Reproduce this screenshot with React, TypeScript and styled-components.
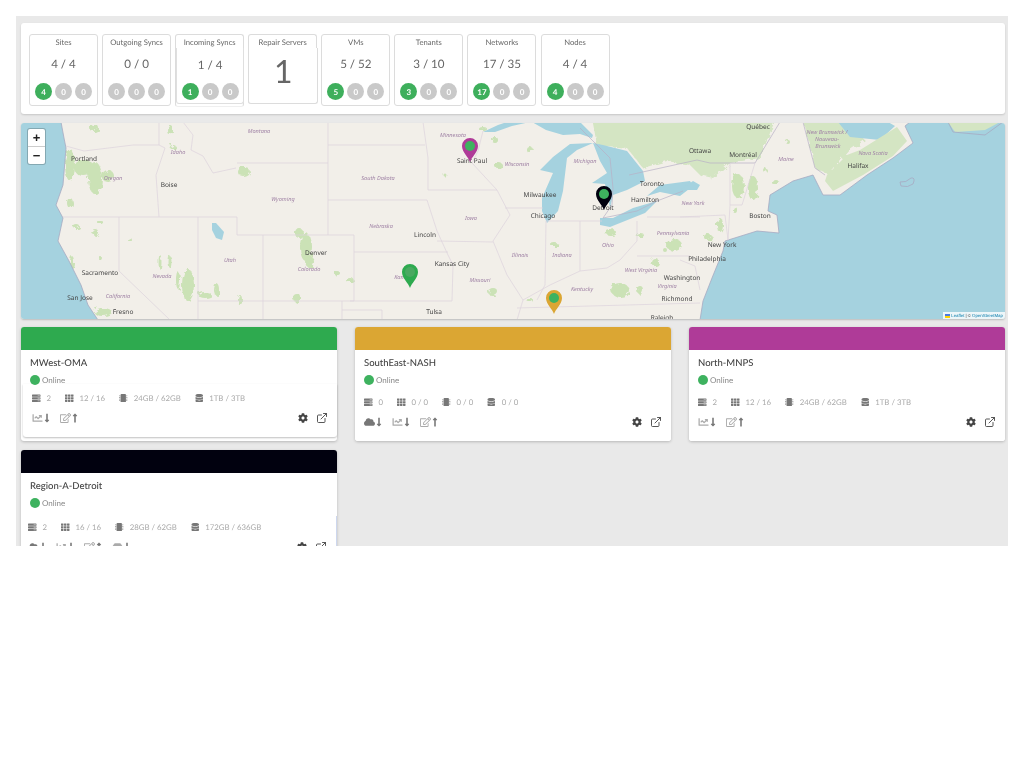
import React from "react";
import styled, { createGlobalStyle } from "styled-components";
import {
  FaServer, FaTh, FaMicrochip, FaDatabase, FaCloud, FaChartLine, FaRegEdit, FaCog,
  FaLongArrowAltDown, FaLongArrowAltUp, FaHdd,
} from "react-icons/fa";
import { ExternalLink } from "lucide-react";

const Global = createGlobalStyle`
  html, body { margin: 0; padding: 0; background: #fff; }
  body { font-family: "Lato", "Liberation Sans", sans-serif; text-rendering: geometricPrecision; }
`;

const Page = styled.div`
  margin: 16px 16px 0;
  width: 992px;
  height: 530px;
  overflow: hidden;
  background: #e9e9e9;
  padding: 7px 3px 0 5px;
  box-sizing: border-box;
  filter: blur(0.45px);
`;

const StatsPanel = styled.section`
  height: 91px;
  box-sizing: border-box;
  background: #fff;
  border-radius: 3px;
  box-shadow: 0 1px 2px rgba(0, 0, 0, 0.15);
  padding: 11px 8px;
  display: flex;
  gap: 4.08px;
`;

const StatCard = styled.div<{ $split?: boolean }>`
  width: 69px;
  height: ${(p) => (p.$split ? 73 : 72)}px;
  box-sizing: border-box;
  border: 1px solid #dcdcdc;
  border-bottom-color: ${(p) => (p.$split ? "#efefef" : "#dcdcdc")};
  border-radius: 3px;
  background: #fff;
  display: flex;
  flex-direction: column;
  align-items: center;
`;

const StatTitle = styled.div`
  font-size: 7.7px;
  line-height: 10px;
  margin: 2px 0 1px;
  color: #666;
  white-space: nowrap;
`;

const StatBody = styled.div<{ $split?: boolean }>`
  box-sizing: border-box;
  display: flex;
  flex-direction: column;
  align-items: center;
  width: ${(p) => (p.$split ? "68px" : "100%")};
  height: ${(p) => (p.$split ? "56px" : "auto")};
  margin-right: ${(p) => (p.$split ? "-1px" : "0")};
  background: #fff;
  ${(p) => (p.$split ? "border: 1px solid #dfdfdf; border-top: none; border-radius: 0 0 3px 3px;" : "")}
`;

const StatValue = styled.div<{ $dy?: number }>`
  font-size: 11.6px;
  line-height: 15px;
  margin-top: ${(p) => 9 + (p.$dy ?? 0)}px;
  color: #666;
  white-space: nowrap;
`;

const Badges = styled.div<{ $dy?: number }>`
  display: flex;
  gap: 3px;
  margin-top: ${(p) => 11 - (p.$dy ?? 0)}px;
`;

const Badge = styled.span<{ $on?: boolean }>`
  width: 17px;
  height: 17px;
  border-radius: 50%;
  background: ${(p) => (p.$on ? "#3eaf5c" : "#c9c9c9")};
  color: #fff;
  font-size: 8px;
  font-weight: 700;
  display: flex;
  align-items: center;
  justify-content: center;
`;

const RepairCard = styled(StatCard)`
  border-bottom: none;
  height: 70px;
  align-items: flex-start;
`;

const RepairTitle = styled(StatTitle)`
  align-self: center;
`;

const BigBody = styled.div`
  width: 70px;
  height: 56px;
  margin-left: -1px;
  box-sizing: border-box;
  border: 1px solid #dcdcdc;
  border-top: none;
  border-radius: 0 0 3px 3px;
  background: #fff;
  font-size: 32px;
  line-height: 46px;
  color: #666;
  text-align: center;
`;

const MapBox = styled.section`
  position: relative;
  height: 196px;
  margin-top: 9px;
  border-radius: 3px;
  overflow: hidden;
  box-shadow: 0 1px 2px rgba(0, 0, 0, 0.2);
  background: #f2efe9;
`;

const MapSvg = styled.svg`
  display: block;
  width: 984px;
  height: 196px;
`;

const ZoomControl = styled.div`
  position: absolute;
  left: 7px;
  top: 6px;
  width: 17px;
  height: 35px;
  background: #fff;
  border-radius: 2px;
  box-shadow: 0 0 0 1px rgba(0, 0, 0, 0.2);
  display: flex;
  flex-direction: column;
`;

const ZoomButton = styled.div`
  flex: 1;
  display: flex;
  align-items: center;
  justify-content: center;
  font-family: "Liberation Sans", sans-serif;
  font-weight: 700;
  font-size: 13px;
  color: #222;
  & + & { border-top: 1px solid #ccc; }
`;

const Attribution = styled.div`
  position: absolute;
  right: 0;
  bottom: 0;
  height: 7px;
  padding: 0 2px;
  display: flex;
  align-items: center;
  gap: 1px;
  background: rgba(255, 255, 255, 0.8);
  font-family: "Liberation Sans", sans-serif;
  font-size: 4.4px;
  color: #444;
  white-space: nowrap;
`;

const Flag = styled.svg`
  width: 5px;
  height: 4px;
`;

const AttrLink = styled.span`
  color: #0078a8;
`;

const CardGrid = styled.div`
  display: grid;
  grid-template-columns: repeat(3, 316px);
  column-gap: 18px;
  row-gap: 9px;
  margin-top: 8px;
  align-items: start;
`;

const SiteCard = styled.article<{ $h: number }>`
  height: ${(p) => p.$h}px;
  background: #fff;
  border-radius: 3px;
  box-shadow: 0 1px 3px rgba(0, 0, 0, 0.22);
`;

const SiteHeader = styled.div<{ $color: string }>`
  height: 23px;
  background: ${(p) => p.$color};
  border-radius: 3px 3px 0 0;
`;

const SiteInfo = styled.div`
  padding: 7px 9px 0;
`;

const SiteName = styled.div`
  font-size: 9.5px;
  line-height: 13px;
  font-weight: 500;
  color: #444;
  white-space: nowrap;
`;

const Status = styled.div`
  display: flex;
  align-items: center;
  gap: 2px;
  margin-top: 5px;
  font-size: 8px;
  line-height: 10px;
  color: #888;
`;

const Dot = styled.span`
  width: 10px;
  height: 10px;
  border-radius: 50%;
  background: #3eb25f;
`;

const SitePanel = styled.div<{ $dx: number; $mt: number; $pt: number; $pl: number; $shadow?: boolean; $edge?: boolean }>`
  margin-top: ${(p) => p.$mt}px;
  margin-left: ${(p) => p.$dx}px;
  padding: ${(p) => p.$pt}px 9px 0 ${(p) => p.$pl}px;
  height: 53px;
  box-sizing: border-box;
  background: #fff;
  border-radius: 0 0 3px 3px;
  box-shadow: ${(p) => (p.$shadow ? "0 1px 2px rgba(0,0,0,0.25)" : "none")};
  border-right: ${(p) => (p.$edge ? "1px solid #cdd7ee" : "none")};
`;

const Metrics = styled.div`
  display: flex;
  gap: 14px;
  align-items: center;
  height: 10px;
`;

const Metric = styled.span`
  display: flex;
  align-items: center;
  gap: 6px;
  font-size: 7.8px;
  color: #aaa;
  white-space: nowrap;
  svg { color: #777; width: 8.5px; height: 8.5px; }
`;

const Actions = styled.div`
  display: flex;
  align-items: center;
  justify-content: space-between;
  margin-top: 10px;
  height: 10px;
`;

const Flows = styled.div`
  display: flex;
  gap: 10px;
`;

const Flow = styled.span<{ $dark?: boolean }>`
  display: flex;
  align-items: center;
  gap: 1px;
  color: ${(p) => (p.$dark ? "#777" : "#aaa")};
  svg { width: 11px; height: 10px; }
`;

const Arrow = styled.span`
  display: flex;
  color: #777;
  svg { width: 6px; height: 10px; }
`;

const Tools = styled.div`
  display: flex;
  align-items: center;
  gap: 8px;
  color: #444;
`;

type Stat = { title: string; value: string; on: string; split?: boolean };

const stats: Stat[] = [
  { title: "Sites", value: "4 / 4", on: "4" },
  { title: "Outgoing Syncs", value: "0 / 0", on: "" },
  { title: "Incoming Syncs", value: "1 / 4", on: "1", split: true },
  { title: "VMs", value: "5 / 52", on: "5" },
  { title: "Tenants", value: "3 / 10", on: "3" },
  { title: "Networks", value: "17 / 35", on: "17" },
  { title: "Nodes", value: "4 / 4", on: "4" },
];

type Metric4 = { hosts: string; cpu: string; mem: string; disk: string };
type Site = {
  name: string;
  color: string;
  h: number;
  m: Metric4;
  flows: ("cloud" | "chart" | "edit" | "hdd")[];
  dx: number;
  mt: number;
  pt: number;
  pl: number;
  shadow?: boolean;
  edge?: boolean;
};

const sites: Site[] = [
  { name: "MWest-OMA", color: "#2eaa4f", h: 114, m: { hosts: "2", cpu: "12 / 16", mem: "24GB / 62GB", disk: "1TB / 3TB" }, flows: ["chart", "edit"], dx: 2, mt: 0, pt: 9, pl: 9, shadow: true },
  { name: "SouthEast-NASH", color: "#dba633", h: 114, m: { hosts: "0", cpu: "0 / 0", mem: "0 / 0", disk: "0 / 0" }, flows: ["cloud", "chart", "edit"], dx: 0, mt: 4, pt: 9, pl: 9 },
  { name: "North-MNPS", color: "#af3b98", h: 114, m: { hosts: "2", cpu: "12 / 16", mem: "24GB / 62GB", disk: "1TB / 3TB" }, flows: ["chart", "edit"], dx: 0, mt: 4, pt: 9, pl: 9 },
  { name: "Region-A-Detroit", color: "#01010f", h: 114, m: { hosts: "2", cpu: "16 / 16", mem: "28GB / 62GB", disk: "172GB / 636GB" }, flows: ["cloud", "chart", "edit", "hdd"], dx: 0, mt: 9, pt: 6, pl: 7, edge: true },
];

const FlowIcon = ({ kind }: { kind: string }) => {
  if (kind === "cloud") return <Flow $dark><FaCloud /><Arrow><FaLongArrowAltDown /></Arrow></Flow>;
  if (kind === "chart") return <Flow><FaChartLine /><Arrow><FaLongArrowAltDown /></Arrow></Flow>;
  if (kind === "hdd") return <Flow><FaHdd /><Arrow><FaLongArrowAltDown /></Arrow></Flow>;
  return <Flow><FaRegEdit /><Arrow><FaLongArrowAltUp /></Arrow></Flow>;
};

const SiteBlock = ({ s }: { s: Site }) => (
  <SiteCard $h={s.h}>
    <SiteHeader $color={s.color} />
    <SiteInfo>
      <SiteName>{s.name}</SiteName>
      <Status><Dot />Online</Status>
    </SiteInfo>
    <SitePanel $dx={s.dx} $mt={s.mt - 1} $pt={s.pt} $pl={s.pl} $shadow={s.shadow} $edge={s.edge}>
      <Metrics>
        <Metric><FaServer />{s.m.hosts}</Metric>
        <Metric><FaTh />{s.m.cpu}</Metric>
        <Metric><FaMicrochip />{s.m.mem}</Metric>
        <Metric><FaDatabase />{s.m.disk}</Metric>
      </Metrics>
      <Actions>
        <Flows>{s.flows.map((f) => <FlowIcon key={f} kind={f} />)}</Flows>
        <Tools>
          <FaCog size={10} />
          <ExternalLink size={12} strokeWidth={1.8} />
        </Tools>
      </Actions>
    </SitePanel>
  </SiteCard>
);

/* ---------- map drawing, in screen coordinates ---------- */
const water = "#a5d2df";
const border = "#ddd3dc";

const City = styled.text`
  font-family: "Noto Sans", "Open Sans", sans-serif;
  font-size: 6.5px;
  fill: #444;
  text-anchor: middle;
  dominant-baseline: central;
`;
const StateName = styled.text`
  font-family: "Noto Sans", "Open Sans", sans-serif;
  font-size: 5.6px;
  font-style: italic;
  fill: #a184a6;
  text-anchor: middle;
  dominant-baseline: central;
`;
const Border = styled.polyline<{ $strong?: boolean }>`
  fill: none;
  stroke: ${(p) => (p.$strong ? "#b7b0c6" : border)};
  stroke-width: 0.7;
`;
const Sea = styled.polygon`
  fill: ${water};
`;
const Coast = styled.polyline`
  fill: none;
  stroke: #a7a9c2;
  stroke-width: 0.8;
`;
const Wood = styled.ellipse`
  fill: #cbe2b6;
`;
const WoodArea = styled.polygon`
  fill: #d4e5c3;
`;

const cities: [string, number, number][] = [
  ["Portland", 84, 158], ["Boise", 169, 184], ["Denver", 316, 252], ["Sacramento", 100, 272], ["San Jose", 80, 297],
  ["Fresno", 123, 311], ["Saint Paul", 472, 160], ["Milwaukee", 540, 194], ["Toronto", 652, 183], ["Hamilton", 645, 199],
  ["Detroit", 603, 207], ["Chicago", 543, 215], ["Lincoln", 425, 234], ["Kansas City", 452, 263], ["Tulsa", 434, 311],
  ["Washington", 682, 277], ["Richmond", 677, 298], ["Raleigh", 662, 317], ["Ottawa", 700, 150], ["Québec", 758, 126],
  ["Montréal", 743, 154], ["Boston", 760, 215], ["New York", 722, 244], ["Philadelphia", 707, 258], ["Halifax", 858, 165],
];
const states: [string, number, number][] = [
  ["Montana", 259, 131], ["Oregon", 113, 178], ["Idaho", 178, 152], ["Wyoming", 283, 199], ["Utah", 230, 260],
  ["Colorado", 309, 269], ["Nevada", 162, 276], ["California", 118, 296], ["Minnesota", 453, 135], ["South Dakota", 378, 178],
  ["Wisconsin", 517, 164], ["Michigan", 585, 161], ["Iowa", 471, 218], ["Nebraska", 381, 226], ["Ohio", 608, 245],
  ["Illinois", 520, 255], ["Indiana", 562, 255], ["Missouri", 480, 280], ["Kansas", 403, 277], ["Kentucky", 582, 289],
  ["West Virginia", 641, 270], ["Virginia", 667, 286], ["Pennsylvania", 673, 233], ["New York", 693, 203], ["Maine", 786, 159],
  ["New Brunswick /", 827, 132], ["Nouveau-", 827, 139], ["Brunswick", 828, 146], ["Nova Scotia", 873, 153],
];
const woods: [number, number, number, number][] = [
  [70, 165, 5, 16], [84, 168, 10, 8], [95, 178, 7, 16], [108, 176, 6, 6], [70, 203, 3, 5], [76, 226, 3, 2], [95, 232, 3, 3],
  [94, 128, 4, 4], [170, 130, 3, 5], [173, 147, 3, 2], [244, 172, 6, 5], [299, 233, 4, 5], [306, 247, 6, 14], [310, 262, 4, 6],
  [297, 298, 4, 4], [337, 273, 3, 2], [188, 285, 6, 16], [205, 295, 7, 3], [217, 290, 3, 6], [178, 280, 2, 9], [160, 262, 1.5, 7],
  [170, 262, 1.5, 6], [100, 258, 2, 2], [72, 262, 2, 6], [103, 312, 9, 4], [483, 129, 4, 2], [495, 140, 3, 3], [498, 165, 4, 3],
  [530, 150, 3, 3], [493, 292, 5, 4], [620, 290, 9, 7], [674, 245, 8, 6], [640, 235, 4, 2], [655, 262, 4, 4], [665, 250, 2, 2],
  [720, 225, 3, 7], [735, 180, 2, 2], [738, 186, 6, 12], [753, 188, 5, 12], [765, 170, 2, 2], [788, 142, 2, 2], [708, 237, 4, 3],
  [445, 175, 1.5, 1.5], [555, 245, 4, 2], [610, 232, 6, 3], [530, 300, 3, 2], [240, 300, 2, 5], [350, 280, 4, 2], [100, 222, 3, 2],
  [130, 240, 2, 2], [775, 182, 3, 3], [735, 210, 2, 3], [640, 290, 3, 4],
];

const Pin = ({ x, y, color, inner }: { x: number; y: number; color: string; inner: string }) => (
  <g transform={`translate(${x} ${y})`}>
    <path d="M0 0 C-1.5 -5 -8 -9.5 -8 -16 A8 8 0 1 1 8 -16 C8 -9.5 1.5 -5 0 0Z" fill={color} />
    <circle cx="0" cy="-16" r="5" fill={inner} />
  </g>
);

const MapDrawing = () => (
  <MapSvg viewBox="21 123 984 196" aria-label="Map of sites">
    <defs>
      <filter id="rough" x="-5%" y="-5%" width="110%" height="110%">
        <feTurbulence type="fractalNoise" baseFrequency="0.18" numOctaves="2" seed="4" />
        <feDisplacementMap in="SourceGraphic" scale="7" />
      </filter>
    </defs>
    <rect x="21" y="123" width="984" height="196" fill="#f2efe9" />
    <g filter="url(#rough)">
      <WoodArea points="592,118 597,145 627,148 643,168 667,161 690,165 700,175 713,178 730,163 760,158 776,118" />
      <WoodArea points="803,118 815,168 829,175 850,150 865,140 840,118" />
      {woods.map(([cx, cy, rx, ry], i) => <Wood key={i} cx={cx} cy={cy} rx={rx} ry={ry} />)}
    </g>
    {/* west coast ocean */}
    <Sea points="21,122 61,122 64,138 66,148 63,185 56,205 63,218 58,241 69,261 81,285 88,305 98,320 21,320" />
    <Coast points="61,122 64,138 66,148 63,185 56,205 63,218 58,241 69,261 81,285 88,305 98,320" />
    {/* Salt Lake */}
    <Sea points="212,223 216,223 224,232 222,240 216,238 212,230" />
    {/* great lakes */}
    <Sea points="483,132 498,125 507,122 530,122 512,126 495,132" />
    <Sea points="532,122 580,122 593,135 592,138 580,134 563,135 546,130" />
    <Sea points="540,170 553,157 570,144 593,143 577,150 567,158 563,191 558,211 547,223 542,211 542,198 553,173" />
    <Sea points="593,143 603,145 627,151 643,171 645,181 627,190 613,195 610,208 605,184 592,183 607,173 600,161" />
    <Sea points="600,218 613,218 633,208 657,201 645,213 610,227 600,225" />
    <Sea points="647,196 660,185 690,181 693,186 680,196 660,192" />
    <Sea points="680,190 693,181 700,185 697,190" />
    <Border $strong points="580,128 593,141 610,158 613,188 612,205 603,218 637,211 657,201 683,191" />
    {/* east ocean */}
    <Sea points="700,320 703,301 712,278 723,251 725,241 757,231 779,233 777,215 768,211 770,195 793,181 813,175 823,195 840,195 867,175 893,158 913,143 905,126 910,122 1006,122 1006,320" />
    <Sea points="838,122 850,137 880,140 895,126 888,122" />
    <WoodArea points="825,181 827,175 847,155 860,150 897,127 907,141 893,156 863,175 833,191" />
    <WoodArea points="948,122 955,132 985,130 1000,122" />
    <Coast points="700,320 703,301 712,278 723,251 725,241 757,231 779,233 777,215 768,211 770,195 793,181 813,175 823,195 840,195 867,175 893,158 913,143 905,126 910,122" />
    <path d="M900 182 Q906 183 911 178 Q916 177 913 184 Q908 188 901 186 Z" fill="none" stroke="#a7a9c2" strokeWidth="0.8" />
    <polyline points="948,122 953,132 985,135 1003,122" fill="none" stroke="#a7a9c2" strokeWidth="0.8" />
    {/* borders */}
    <Border points="66,146 84,151 133,145 159,145" />
    <Border points="159,122 159,145 165,148 156,175 159,217" />
    <Border points="63,217 237,217" />
    <Border points="198,217 198,320" />
    <Border points="119,217 119,271 170,320" />
    <Border points="183,122 193,135 191,150 203,156 213,173 236,168" />
    <Border points="237,163 328,163 328,235 237,235 237,217" />
    <Border points="263,235 263,320" />
    <Border points="328,122 328,163" />
    <Border points="328,145 425,145" />
    <Border points="328,200 427,200" />
    <Border points="328,235 354,235 354,301 198,301" />
    <Border points="342,301 342,320" />
    <Border points="342,310 382,310 382,320" />
    <Border points="423,122 428,158 428,190 497,190" />
    <Border points="354,252 448,252" />
    <Border points="427,200 437,231 448,255 453,265 452,301 350,301" />
    <Border points="437,241 493,242" />
    <Border points="483,131 478,151 472,163 497,190 510,215 493,241 507,275 523,300 517,320" />
    <Border points="505,208 543,208" />
    <Border points="546,221 545,285 537,300" />
    <Border points="580,221 580,271" />
    <Border points="546,221 602,221" />
    <Border points="523,300 550,285 580,271 607,268 620,260 637,241 637,221" />
    <Border points="637,256 690,256" />
    <Border points="647,217 700,217" />
    <Border points="517,308 700,303" />
    <Border points="680,260 695,266 700,290" />
    <Border $strong points="697,160 710,163 755,163 780,122" />
    <Border $strong points="629,175 697,160" />
    <Border points="730,163 730,205 728,240" />
    <Border points="755,163 742,205 730,205" />
    <Border points="680,217 725,215 728,240" />
    <Border $strong points="803,122 815,168 825,175" />
    {states.map(([t, x, y]) => <StateName key={t + x} x={x} y={y}>{t}</StateName>)}
    {cities.map(([t, x, y]) => <City key={t} x={x} y={y}>{t}</City>)}
    <Pin x={410} y={288} color="#2eaa4f" inner="#4aa961" />
    <Pin x={470} y={162} color="#af3b98" inner="#3eb25f" />
    <Pin x={604} y={210} color="#01010f" inner="#3eb25f" />
    <Pin x={554} y={314} color="#dba633" inner="#3eb25f" />
  </MapSvg>
);

export default function App() {
  const [a, b, c, ...rest] = stats;
  const renderStat = (s: Stat) => (
    <StatCard key={s.title} $split={s.split}>
      <StatTitle>{s.title}</StatTitle>
      <StatBody $split={s.split}>
        <StatValue $dy={s.split ? 1 : 0}>{s.value}</StatValue>
        <Badges $dy={s.split ? 1 : 0}>
          <Badge $on={!!s.on}>{s.on || "0"}</Badge>
          <Badge>0</Badge>
          <Badge>0</Badge>
        </Badges>
      </StatBody>
    </StatCard>
  );
  return (
    <>
      <Global />
      <Page>
        <StatsPanel>
          {[a, b, c].map(renderStat)}
          <RepairCard>
            <RepairTitle>Repair Servers</RepairTitle>
            <BigBody>1</BigBody>
          </RepairCard>
          {rest.map(renderStat)}
        </StatsPanel>
        <MapBox>
          <MapDrawing />
          <ZoomControl>
            <ZoomButton>+</ZoomButton>
            <ZoomButton>−</ZoomButton>
          </ZoomControl>
          <Attribution>
            <Flag viewBox="0 0 5 4"><rect width="5" height="2" fill="#4c7be1" /><rect y="2" width="5" height="2" fill="#ffd500" /></Flag>
            <AttrLink>Leaflet</AttrLink> | © <AttrLink>OpenStreetMap</AttrLink>
          </Attribution>
        </MapBox>
        <CardGrid>
          {sites.map((s) => <SiteBlock key={s.name} s={s} />)}
        </CardGrid>
      </Page>
    </>
  );
}
